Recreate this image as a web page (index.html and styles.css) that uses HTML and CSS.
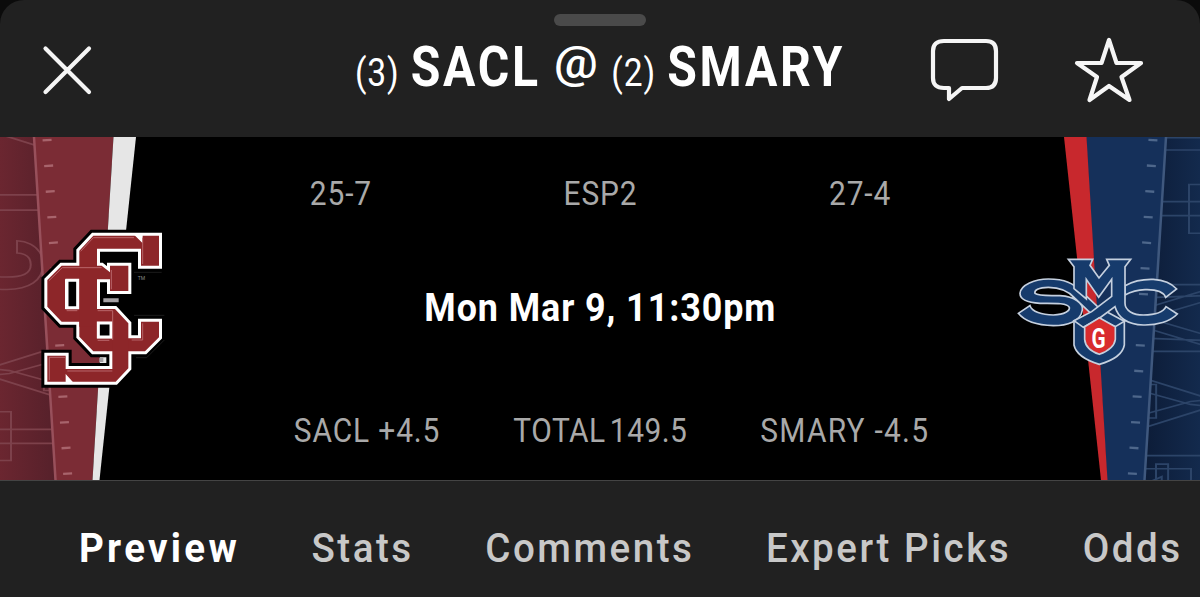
FILE: index.html
```html
<!DOCTYPE html>
<html lang="en">
<head>
  <meta charset="UTF-8">
  <meta name="viewport" content="width=device-width, initial-scale=1.0">
  <title>SACL @ SMARY</title>
  <link rel="stylesheet" href="styles.css">
</head>
<body>
  <div class="sheet">
    <header class="header">
      <div class="grabber"></div>
      <div class="header-row">
        <button class="icon-btn" aria-label="Close">
          <svg width="52" height="52" viewBox="0 0 52 52"><path d="M4.500 4.500 48 48M48 4.500 4.500 48"/></svg>
        </button>
        <h1 class="title"><span class="seed">(3)</span> <span class="team">SACL</span> <span class="at">@</span> <span class="seed">(2)</span> <span class="team">SMARY</span></h1>
        <div class="actions">
          <button class="icon-btn" aria-label="Comments">
            <svg width="70" height="68" viewBox="0 0 70 68"><path d="M14 5H56Q66 5 66 15V42Q66 52 56 52H32L19 63V52H14Q3 52 3 42V15Q3 5 14 5Z"/></svg>
          </button>
          <button class="icon-btn" aria-label="Favorite">
            <svg width="70" height="68" viewBox="0 0 70 68"><path d="M35 4 42.500 27H67L47.500 41 55.500 64 35 50 15.500 64 23 41 3 27H27.500Z"/></svg>
          </button>
        </div>
      </div>
    </header>

    <section class="banner">
      <svg class="side" width="170" height="343" viewBox="0 0 170 343">
        <defs>
          <linearGradient id="maroon"><stop offset="0" stop-color="#6b2630"/><stop offset="1" stop-color="#54202a"/></linearGradient>
          <clipPath id="clip-left"><path d="M0 0H34L55 343H0Z"/></clipPath>
        </defs>
        <path d="M0 0H40L60 343H0Z" fill="url(#maroon)"/>
        <g clip-path="url(#clip-left)">
          <g class="watermark maroon-line">
            <text class="heavy" transform="translate(72 325) rotate(-90) scale(.78 1)">T</text>
            <text transform="translate(72 265) rotate(-90) scale(.85 1)">A</text>
            <text transform="translate(42 156) rotate(-90) scale(.8 1)">C</text>
            <text class="heavy" transform="translate(72 78) rotate(-90) scale(.85 1)">L</text>
            <text transform="translate(72 20) rotate(-90) scale(.85 1)">A</text>
          </g>
        </g>
        <path d="M34 0H113.500L92.500 343H55Z" fill="#7b2c35"/>
        <path d="M113.500 0H136L99.500 343H92.500Z" fill="#e6e6e6"/>
        <path d="M34 0 55.500 343" stroke="#98505b" stroke-width="2.500"/>
        <path d="M47 2 68 343" stroke="#a8646c" stroke-width="9" stroke-dasharray="2.300 23.400"/>
        <g transform="translate(30 83) scale(.33333)">
          <g id="sc">
            <path d="M190 47H387V137H333V86H201V355H333V305H387V352L345 394H190L148 350V92Z"/>
            <path d="M95 137H215L240 157V137H295V213H240V178H201V267H255L295 310V445L257 485H52V407H107V447H247V305H95L52 260V180ZM105 178V267H148V178Z"/>
          </g>
          <use href="#sc" fill="#000" stroke="#000" stroke-width="36"/>
          <path d="M201 86H333V305H201ZM105 178H148V267H105ZM201 305H247V355H201Z" fill="#000"/>
          <use href="#sc" fill="none" stroke="#fff" stroke-width="18"/>
          <use href="#sc" fill="#8d2629"/>
          <path d="M148 150H201V320H148ZM201 267H247V305H201Z" fill="#8d2629"/>
          <path d="M111 181H143V263H111ZM205 309H243V351H205Z" fill="#000" stroke="#fff" stroke-width="9"/>
          <path d="M313 45H338V70ZM107 490V462L132 490Z" fill="#fff"/>
          <path d="M152 94 190 53H312M338 53V132M57 182 97 143H215M244 150V208M110 272H142M203 272H248V360M203 361H238M338 310V360H305M58 412V480M112 453H247M57 412H105" fill="none" stroke="#b9656a" stroke-width="3"/>
          <path d="M220 235H266V247H220ZM208 413H220V426H208Z" fill="#a5a1a5"/>
          <path d="M312 157H395M312 286H403M403 360 350 413H318" fill="none" stroke="#292929" stroke-width="2"/>
          <text x="323" y="179" class="tm">TM</text>
        </g>
      </svg>

      <div class="game">
        <div class="row records"><span>25-7</span><span>ESP2</span><span>27-4</span></div>
        <div class="kickoff">Mon Mar 9, 11:30pm</div>
        <div class="row lines"><span>SACL +4.5</span><span class="total">TOTAL 149.5</span><span class="away">SMARY -4.5</span></div>
      </div>

      <svg class="side" width="190" height="343" viewBox="1010 0 190 343">
        <defs>
          <linearGradient id="navy"><stop offset="0" stop-color="#0c1b36"/><stop offset="1" stop-color="#132a4d"/></linearGradient>
          <clipPath id="clip-right"><path d="M1166 0H1200V343H1145Z"/></clipPath>
        </defs>
        <path d="M1160 0H1200V343H1140Z" fill="url(#navy)"/>
        <g clip-path="url(#clip-right)">
          <g class="watermark navy-line">
            <text transform="translate(1128 -41) rotate(90) scale(.8 1)">N</text>
            <text class="heavy" transform="translate(1128 46) rotate(90) scale(.78 1)">T</text>
            <text transform="translate(1128 142) rotate(90) scale(.85 1)">M</text>
            <text transform="translate(1128 236) rotate(90) scale(.85 1)">A</text>
            <text transform="translate(1128 313) rotate(90) scale(.85 1)">R</text>
          </g>
        </g>
        <path d="M1086 0H1166L1145 343H1107Z" fill="#15305a"/>
        <path d="M1064 0H1086.500L1107.500 343H1101Z" fill="#c8282d"/>
        <path d="M1166 0 1144.500 343" stroke="#3f587e" stroke-width="2.500"/>
        <path d="M1153 2 1132 343" stroke="#4e678b" stroke-width="9" stroke-dasharray="2.300 23.400"/>
        <g class="smc-logo" transform="translate(1010 113) scale(.33333)">
          <path d="M192 208V285C198 315 235 333 268 343C303 333 338 315 343 285V212L268 190Z"/>
          <path d="M25 190 60 167C66 185 95 195 130 195C165 194 180 182 178 172C172 158 130 160 90 160C50 158 30 148 30 130C32 105 75 87 115 87C165 87 190 100 215 125L265 172 343 214 316 230 265 205 240 188 195 145C175 122 145 112 115 112C85 112 72 122 75 130C85 138 110 136 150 137C195 140 220 160 217 180C212 215 170 227 130 227C80 226 45 215 25 190Z"/>
          <path d="M345 107C370 93 400 87 430 88C462 90 485 100 500 117L467 142C460 125 435 118 405 119C380 120 362 126 345 135Z"/>
          <path d="M175 28H248L240 46 267 84 298 46 290 28H362L345 50V160C345 182 370 195 400 195C435 195 460 187 468 170L502 192C480 215 440 226 400 225C355 223 325 205 315 170L265 207 220 232 192 212 245 185 305 139V88L266 142 229 88V147L192 116V50Z"/>
          <path class="shield" d="M268 203 316 230V268C313 292 290 305 268 313C245 305 226 292 224 268V230Z"/>
          <text transform="translate(266 293) scale(.76 1)" class="shield-letter">G</text>
        </g>
      </svg>
    </section>

    <nav class="tabs">
      <a class="tab active">Preview</a>
      <a class="tab">Stats</a>
      <a class="tab">Comments</a>
      <a class="tab">Expert Picks</a>
      <a class="tab">Odds</a>
    </nav>
  </div>
</body>
</html>
```
FILE: styles.css
```css
* {
  margin: 0;
  padding: 0;
  box-sizing: border-box;
}

body {
  background-color: #0b0b0b;
  color: #fff;
  font-family: Roboto, "Liberation Sans", sans-serif;
  overflow: hidden;
}

.sheet {
  width: 1200px;
  height: 597px;
  background-color: #212121;
  border-radius: 24px 24px 0 0;
  overflow: hidden;
}

.header {
  height: 137px;
  padding-top: 14px;
}

.grabber {
  width: 92px;
  height: 12px;
  margin: 0 auto;
  border-radius: 6px;
  background-color: #4a4a4a;
}

.header-row {
  display: grid;
  grid-template-columns: 250px 700px 250px;
  height: 88px;
  align-items: center;
}

.icon-btn {
  background: none;
  border: none;
  justify-self: start;
  margin-left: 41px;
  display: flex;
}

.icon-btn svg {
  fill: none;
  stroke: #f5f5f5;
  stroke-width: 4.2;
  stroke-linecap: round;
  stroke-linejoin: round;
}

.title {
  display: flex;
  justify-content: center;
  align-items: baseline;
  gap: 13px;
  font-size: 56px;
  line-height: 80px;
  white-space: nowrap;
  transform: scaleX(0.86);
}

.seed {
  font-size: 39px;
  font-weight: 400;
  letter-spacing: 1px;
}

.at {
  font-weight: 500;
  font-size: 49px;
  margin: 0 6px;
  transform: translateY(-6px) scale(1.16, 0.9);
}

.team {
  letter-spacing: 3.2px;
}

.actions {
  display: flex;
  gap: 74px;
  margin-left: -20.5px;
}

.actions .icon-btn {
  margin-left: 0;
}

.banner {
  display: flex;
  height: 343px;
  background-color: #000;
}

.side {
  flex: none;
}

.watermark {
  font-family: Roboto, sans-serif;
  font-weight: 700;
  font-size: 105px;
  fill: none;
  stroke-width: 2;
}

.heavy {
  font-weight: 900;
}

.maroon-line {
  stroke: #7d414b;
}

.navy-line {
  stroke: #2c4468;
}

.tm {
  font-size: 15px;
  fill: #888;
}

.smc-logo path {
  fill: #163b6c;
  stroke: #c5d0df;
  stroke-width: 5;
}

.smc-logo .shield {
  fill: #d92b2d;
}

.shield-letter {
  font-size: 82px;
  font-weight: 700;
  fill: #fff;
  text-anchor: middle;
}

.game {
  width: 840px;
  display: flex;
  flex-direction: column;
  justify-content: space-between;
  align-items: center;
  padding: 36px 0 30px 20px;
}

.row {
  font-size: 34px;
  line-height: 40px;
  color: #a9a9a9;
  white-space: nowrap;
  letter-spacing: 1px;
  transform: scaleX(0.88);
}

.records {
  display: grid;
  grid-template-columns: repeat(3, 295px);
  text-align: center;
}

.kickoff {
  font-size: 39px;
  line-height: 46px;
  margin-bottom: 8px;
  font-weight: 700;
  letter-spacing: 1px;
  white-space: nowrap;
  transform: scaleX(0.92);
}

.lines {
  display: flex;
  gap: 83px;
  padding-left: 26px;
}

.total {
  letter-spacing: 0.5px;
  word-spacing: -4px;
}

.away {
  letter-spacing: 1.4px;
}

.tabs {
  display: flex;
  gap: 76px;
  width: 1277px;
  height: 117px;
  padding-left: 84px;
  border-top: 1px solid #444;
  transform: scaleX(0.94);
  transform-origin: left;
}

.tab {
  font-size: 41px;
  line-height: 134px;
  font-weight: 500;
  letter-spacing: 2.7px;
  color: #c8c8c8;
  white-space: nowrap;
}

.active {
  color: #fff;
  font-weight: 700;
  letter-spacing: 3.5px;
}
```
